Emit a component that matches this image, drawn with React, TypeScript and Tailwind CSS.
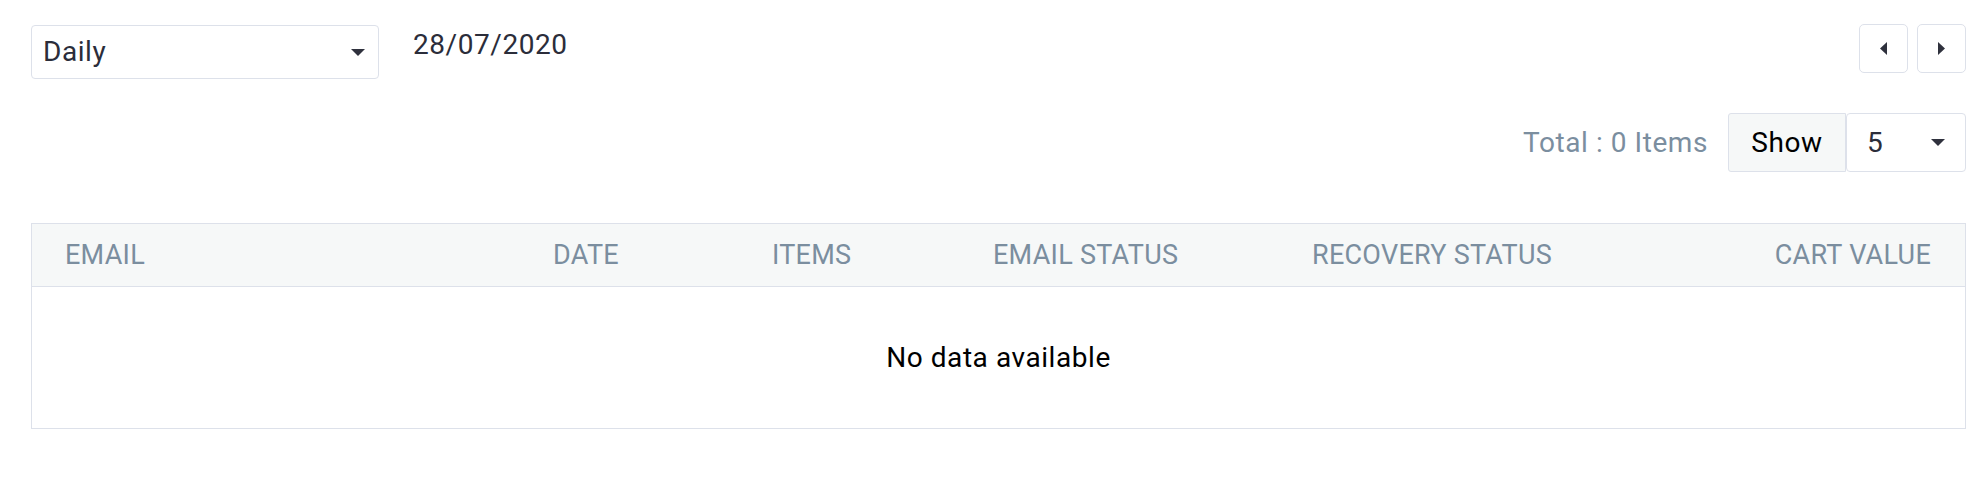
const Caret = ({ dir }: { dir: "down" | "left" | "right" }) => {
  if (dir === "down") {
    return (
      <svg width="14" height="7" viewBox="0 0 14 7" className="shrink-0">
        <path d="M0 0h14L7 7z" fill="#2f313d" />
      </svg>
    )
  }
  return (
    <svg width="7" height="13" viewBox="0 0 7 13" className="shrink-0">
      <path d={dir === "left" ? "M7 0v13L0 6.5z" : "M0 0v13l7-6.5z"} fill="#2f313d" />
    </svg>
  )
}

const columns = ["EMAIL", "DATE", "ITEMS", "EMAIL STATUS", "RECOVERY STATUS"]

const App = () => {
  return (
    <div className="h-[494px] w-[1988px] bg-white pl-[31px] pr-[22px] pt-[24px] font-['Roboto',sans-serif] tracking-[0.035em]">
      <div className="flex items-start justify-between">
        <div className="flex items-start">
          <div className="mt-[1px] flex h-[54px] w-[348px] items-center justify-between rounded-[4px] border border-[#dde1ea] pl-[11px] pr-[13px]">
            <span className="text-[28px] leading-[34px] text-[#2b2d3a]">Daily</span>
            <Caret dir="down" />
          </div>
          <p className="ml-[34px] mt-[4px] text-[28px] leading-[34px] text-[#2b2d3a]">28/07/2020</p>
        </div>
        <div className="flex gap-[9px]">
          <button type="button" className="flex h-[49px] w-[49px] items-center justify-center rounded-[5px] border border-[#dde1ea] bg-white">
            <Caret dir="left" />
          </button>
          <button type="button" className="flex h-[49px] w-[49px] items-center justify-center rounded-[5px] border border-[#dde1ea] bg-white">
            <Caret dir="right" />
          </button>
        </div>
      </div>

      <div className="mt-[34px] flex items-center justify-end">
        <span className="mr-[20px] text-[28px] leading-[34px] text-[#7b8e9f]">Total : 0 Items</span>
        <div className="flex h-[59px] w-[118px] items-center justify-center rounded-l-[3px] border border-[#dde1ea] bg-[#f6f8f8] text-[28px] text-black">
          Show
        </div>
        <div className="flex h-[59px] w-[120px] items-center justify-between rounded-[4px] border border-[#dde1ea] bg-white pl-[20px] pr-[20px]">
          <span className="text-[28px] leading-[34px] text-[#2b2d3a]">5</span>
          <Caret dir="down" />
        </div>
      </div>

      <div className="mt-[51px] border border-[#dde1ea]">
        <div className="grid h-[63px] grid-cols-[488px_219px_221px_319px_1fr_auto] items-center border-b border-[#dde1ea] bg-[#f6f8f8] pl-[33px] pr-[34px] text-[27px] tracking-[0.01em] text-[#7b8e9f]">
          {columns.map((c) => (
            <span key={c}>{c}</span>
          ))}
          <span className="text-right">CART VALUE</span>
        </div>
        <div className="flex h-[141px] items-center justify-center text-[28px] text-black">No data available</div>
      </div>
    </div>
  )
}

export default App
